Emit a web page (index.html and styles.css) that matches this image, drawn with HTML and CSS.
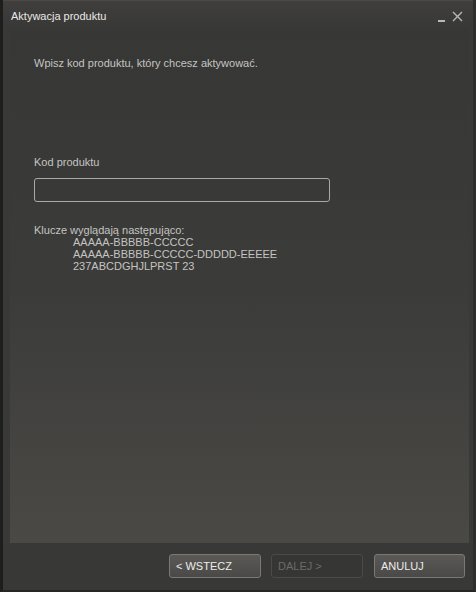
FILE: index.html
```html
<!DOCTYPE html>
<html lang="pl">
<head>
<meta charset="utf-8">
<title>Aktywacja produktu</title>
<link rel="stylesheet" href="styles.css">
</head>
<body>
<div class="window">
  <div class="titlebar">
    <span class="title">Aktywacja produktu</span>
    <div class="controls">
      <span class="minimize"></span>
      <svg class="close" width="11" height="11" viewBox="0 0 11 11"><path d="M1 1L10 10M10 1L1 10" stroke="#b8b8b6" stroke-width="1.4"/></svg>
    </div>
  </div>
  <div class="main">
    <div class="panel">
      <p class="intro">Wpisz kod produktu, który chcesz aktywować.</p>
      <label class="label" for="code">Kod produktu</label>
      <input class="code-input" id="code" type="text">
      <div class="examples">
        <div>Klucze wyglądają następująco:</div>
        <div class="ex">AAAAA-BBBBB-CCCCC</div>
        <div class="ex">AAAAA-BBBBB-CCCCC-DDDDD-EEEEE</div>
        <div class="ex">237ABCDGHJLPRST 23</div>
      </div>
    </div>
  </div>
  <div class="footer">
    <button class="btn">&lt; WSTECZ</button>
    <button class="btn disabled">DALEJ &gt;</button>
    <button class="btn last">ANULUJ</button>
  </div>
</div>
</body>
</html>
```
FILE: styles.css
```css
html, body {
  margin: 0;
  padding: 0;
  background: #2b2b29;
}
.window {
  width: 476px;
  height: 592px;
  box-sizing: border-box;
  display: flex;
  flex-direction: column;
  background: #3a3a38;
  border-left: 3px solid #1e1e1d;
  border-right: 3px solid #2e2e2c;
  border-bottom: 2px solid #262624;
  font-family: "Liberation Sans", Arial, sans-serif;
  font-size: 11px;
  color: #c4c4c2;
}
.titlebar {
  height: 30px;
  flex: none;
  display: flex;
  align-items: center;
  justify-content: space-between;
  padding: 0 10px 0 8px;
  background: linear-gradient(#3f3e3c, #383836);
  border-top: 1px solid #4a4946;
  box-sizing: border-box;
}
.title {
  color: #e8e8e6;
  font-size: 11px;
}
.controls {
  display: flex;
  align-items: center;
  gap: 7px;
  margin-top: 1px;
}
.minimize {
  width: 7px;
  height: 2px;
  background: #b8b8b6;
  margin-top: 9px;
}
.main {
  flex: 1;
  display: flex;
  padding: 0 4px 0 7px;
  background: #393937;
}
.panel {
  flex: 1;
  background: linear-gradient(#373735, #3b3b39 50%, #4a4946);
  padding-left: 24px;
  display: flex;
  flex-direction: column;
  align-items: flex-start;
}
.intro {
  margin: 26px 0 0;
  line-height: 14px;
}
.label {
  margin-top: 85px;
  line-height: 14px;
}
.code-input {
  margin-top: 9px;
  width: 296px;
  height: 24px;
  box-sizing: border-box;
  border: 1px solid #a9a9a7;
  border-radius: 3px;
  background: transparent;
  outline: none;
  color: #ddd;
}
.examples {
  margin-top: 22px;
  line-height: 12px;
}
.ex {
  padding-left: 39px;
}
.footer {
  height: 47px;
  flex: none;
  display: flex;
  justify-content: flex-end;
  align-items: flex-start;
  gap: 10px;
  padding: 11px 8px 0 0;
  box-sizing: border-box;
  background: #383836;
}
.btn {
  width: 92px;
  height: 24px;
  box-sizing: border-box;
  border: 1px solid #7a7977;
  border-radius: 3px;
  background: linear-gradient(#5a5956, #4a4947);
  color: #ececea;
  font-family: "Liberation Sans", Arial, sans-serif;
  font-size: 11px;
  text-align: left;
  padding: 0 6px;
}
.btn.last {
  width: 91px;
  margin-left: 1px;
}
.btn.disabled {
  border-color: #4b4a48;
  background: #363634;
  color: #6c6b69;
}
```
